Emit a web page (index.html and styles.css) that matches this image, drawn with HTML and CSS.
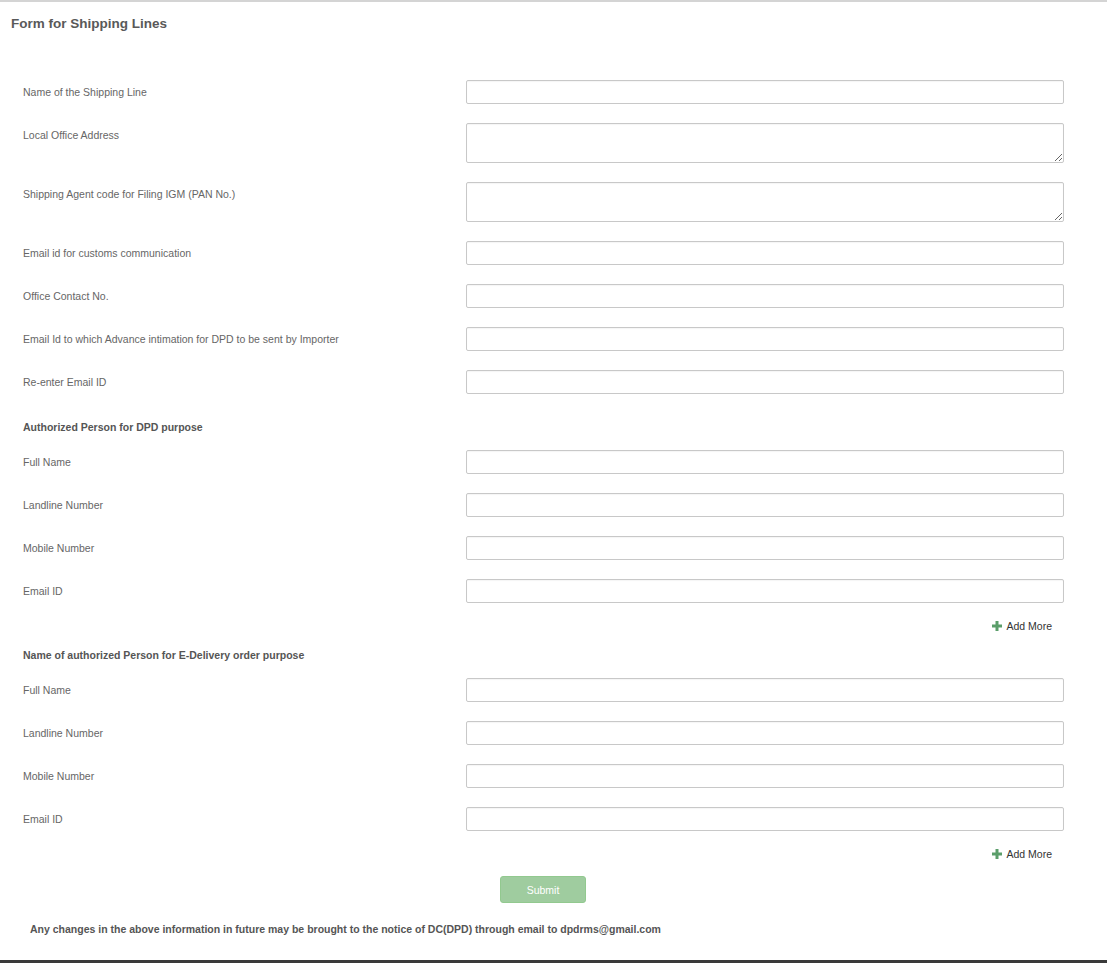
FILE: index.html
```html
<!DOCTYPE html>
<html>
<head>
<meta charset="utf-8">
<title>Form for Shipping Lines</title>
<link rel="stylesheet" href="styles.css">
</head>
<body>
<div class="page">
  <h1 class="title">Form for Shipping Lines</h1>
  <form class="form">
    <div class="row"><label class="lbl">Name of the Shipping Line</label><input class="field" type="text"></div>
    <div class="row"><label class="lbl">Local Office Address</label><textarea class="field area"></textarea></div>
    <div class="row"><label class="lbl">Shipping Agent code for Filing IGM (PAN No.)</label><textarea class="field area"></textarea></div>
    <div class="row"><label class="lbl">Email id for customs communication</label><input class="field" type="text"></div>
    <div class="row"><label class="lbl">Office Contact No.</label><input class="field" type="text"></div>
    <div class="row"><label class="lbl">Email Id to which Advance intimation for DPD to be sent by Importer</label><input class="field" type="text"></div>
    <div class="row"><label class="lbl">Re-enter Email ID</label><input class="field" type="text"></div>

    <div class="section first">Authorized Person for DPD purpose</div>
    <div class="row"><label class="lbl">Full Name</label><input class="field" type="text"></div>
    <div class="row"><label class="lbl">Landline Number</label><input class="field" type="text"></div>
    <div class="row"><label class="lbl">Mobile Number</label><input class="field" type="text"></div>
    <div class="row"><label class="lbl">Email ID</label><input class="field" type="text"></div>
    <div class="addrow"><span></span><a class="add" href="#"><svg class="plus" width="10" height="10" viewBox="0 0 10 10"><rect x="3.5" y="0" width="3" height="10"/><rect x="0" y="3.5" width="10" height="3"/></svg>Add More</a></div>

    <div class="section">Name of authorized Person for E-Delivery order purpose</div>
    <div class="row"><label class="lbl">Full Name</label><input class="field" type="text"></div>
    <div class="row"><label class="lbl">Landline Number</label><input class="field" type="text"></div>
    <div class="row"><label class="lbl">Mobile Number</label><input class="field" type="text"></div>
    <div class="row"><label class="lbl">Email ID</label><input class="field" type="text"></div>
    <div class="addrow"><span></span><a class="add" href="#"><svg class="plus" width="10" height="10" viewBox="0 0 10 10"><rect x="3.5" y="0" width="3" height="10"/><rect x="0" y="3.5" width="10" height="3"/></svg>Add More</a></div>

    <div class="submitrow"><button class="submit" type="button">Submit</button></div>
    <p class="note">Any changes in the above information in future may be brought to the notice of DC(DPD) through email to dpdrms@gmail.com</p>
  </form>
  <div class="bottombar"></div>
</div>
</body>
</html>
```
FILE: styles.css
```css
* { box-sizing: border-box; }
html, body { margin: 0; padding: 0; background: #fff; }
body { font-family: "Liberation Sans", Arial, sans-serif; color: #666; }

.page {
  width: 1107px;
  min-height: 963px;
  border-top: 2px solid #d4d4d4;
  display: flex;
  flex-direction: column;
}

.title {
  margin: 0;
  padding: 14px 11px 0;
  font-size: 13.5px;
  line-height: 16px;
  font-weight: bold;
  color: #595959;
}

.form {
  padding-top: 48px;
  flex: 1;
  display: flex;
  flex-direction: column;
}

.row {
  display: grid;
  grid-template-columns: 443px 598px;
  padding-left: 23px;
  margin-bottom: 19px;
  align-items: start;
}

.lbl {
  font-size: 10.5px;
  line-height: 24px;
  color: #666;
}

.field {
  display: block;
  width: 598px;
  height: 24px;
  margin: 0;
  border: 1px solid #c8c8c8;
  border-radius: 2px;
  background: #fff;
  font: 11px "Liberation Sans", Arial, sans-serif;
  padding: 2px 6px;
  box-shadow: inset 0 1px 1px rgba(0,0,0,0.04);
}

.area {
  height: 40px;
  resize: vertical;
}

.section {
  padding-left: 23px;
  font-size: 10.5px;
  line-height: 28px;
  font-weight: bold;
  color: #555;
  margin-bottom: 9px;
}

.addrow + .section { margin-top: 8px; }

.addrow {
  display: grid;
  grid-template-columns: 466px 598px;
  margin-top: -3px;
  height: 14px;
}

.add {
  justify-self: end;
  padding-right: 12px;
  font-size: 10.5px;
  line-height: 14px;
  color: #333;
  text-decoration: none;
  display: flex;
  align-items: center;
  gap: 4px;
}

.plus { fill: #5b9e6a; display: block; }

.submitrow {
  display: flex;
  justify-content: center;
  padding-right: 21px;
  margin-top: 15px;
}

.submit {
  width: 86px;
  height: 27px;
  background: #9fcc9f;
  border: 1px solid #92c98f;
  border-radius: 3px;
  color: #fff;
  font: 10.5px "Liberation Sans", Arial, sans-serif;
  padding: 0;
}

.note {
  margin: 18px 0 0;
  padding-left: 30px;
  font-size: 10.5px;
  line-height: 16px;
  font-weight: bold;
  color: #555;
}

.bottombar {
  margin-top: auto;
  height: 3px;
  background: #3a3a3a;
}
```
